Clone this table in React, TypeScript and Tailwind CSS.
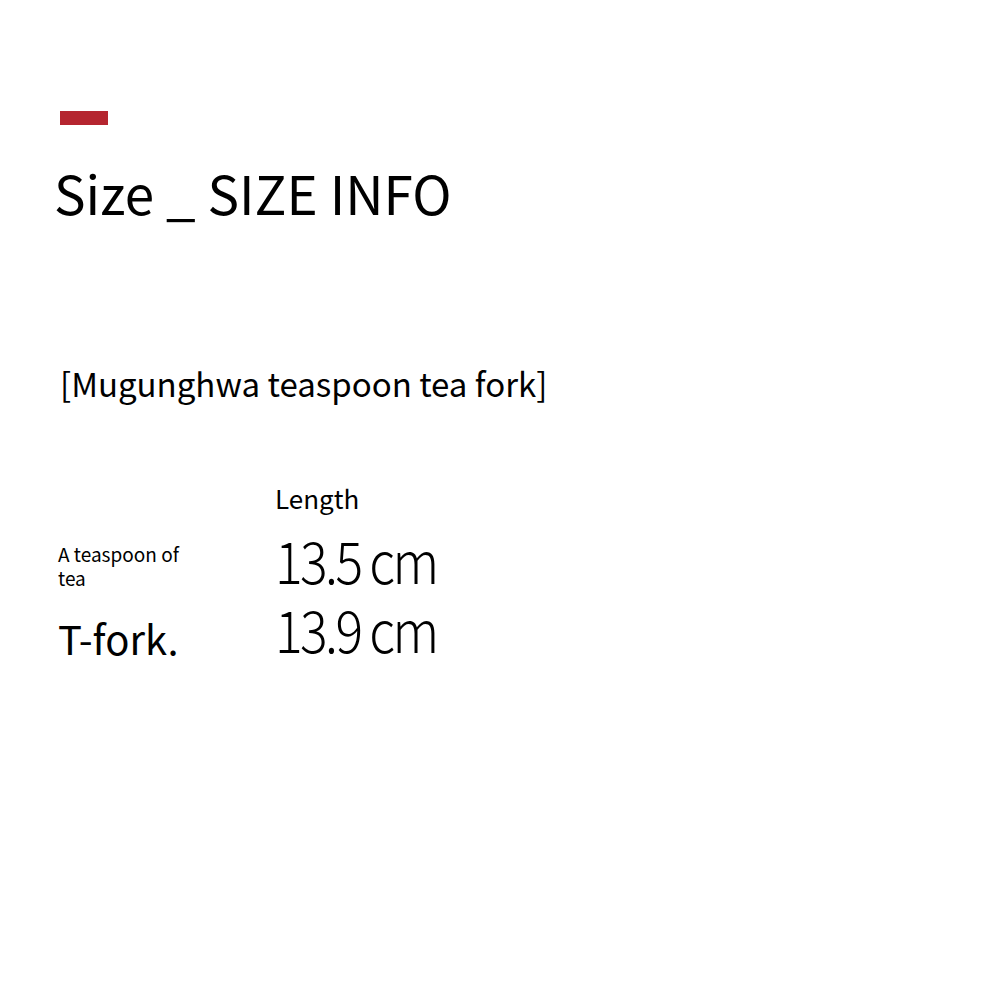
import React from 'react';

const font = { fontFamily: '"Noto Sans CJK SC", "Noto Sans", sans-serif' };

export default function App() {
  return (
    <div className="w-[1000px] h-[1000px] bg-white text-black" style={font}>
      <div className="pt-[111px] pl-[60px]">
        <div className="w-[48px] h-[14px] bg-[#b5252f]" />
      </div>
      <h1 className="pl-[54px] mt-[27px] text-[53px] leading-[80px] font-normal">Size _ SIZE INFO</h1>

      <p className="pl-[60px] mt-[126px] text-[33px] leading-[50px]">[Mugunghwa teaspoon tea fork]</p>

      <div className="pl-[58px] mt-[72px] grid grid-cols-[217px_1fr]">
        <div />
        <div className="text-[26px] leading-[36px] pb-[9px]">Length</div>

        <div className="text-[19px] leading-[24px] pt-[17px]">
          A teaspoon of
          <br />
          tea
        </div>
        <div className="text-[58px] leading-[69px] font-light tracking-[-0.05em] scale-x-[0.89] origin-left whitespace-nowrap">
          13.5 cm
        </div>

        <div className="text-[40px] leading-[60px] pt-[14px]">T-fork.</div>
        <div className="text-[58px] leading-[69px] font-light tracking-[-0.05em] scale-x-[0.89] origin-left whitespace-nowrap">
          13.9 cm
        </div>
      </div>
    </div>
  );
}
